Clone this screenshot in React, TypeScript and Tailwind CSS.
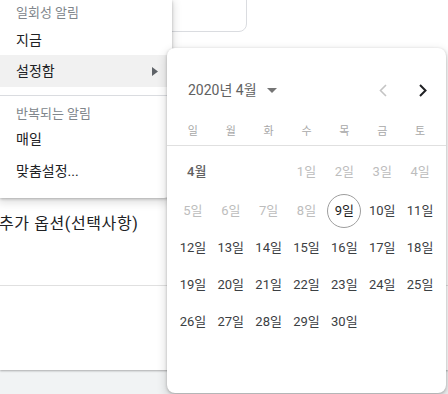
import React from "react";

const FONT = { fontFamily: "Roboto, 'Noto Sans CJK KR', 'Noto Sans', sans-serif" };

function Cell({ d, kind }: { d: number | null; kind: "past" | "today" | "future" | "empty" }) {
  if (kind === "empty" || d === null) return <div className="h-[37px]" />;
  if (kind === "today")
    return (
      <div className="h-[37px] flex items-center justify-center">
        <div className="w-[34px] h-[34px] rounded-full border border-[#9e9e9e] flex items-center justify-center text-[13px] text-[#212121]">
          {d}일
        </div>
      </div>
    );
  return (
    <div
      className={
        "h-full min-h-[37px] flex items-center justify-center text-[13px] " +
        (kind === "past" ? "text-[#bdbdbd]" : "text-[#3c4043]")
      }
    >
      {d}일
    </div>
  );
}

export default function App() {
  const days: { d: number | null; kind: "past" | "today" | "future" | "empty" }[] = [];
  for (let i = 1; i <= 30; i++) {
    days.push({ d: i, kind: i < 9 ? "past" : i === 9 ? "today" : "future" });
  }
  const week = ["일", "월", "화", "수", "목", "금", "토"];
  return (
    <div className="w-[448px] h-[394px] relative overflow-hidden bg-[#f1f3f4]" style={FONT}>
      {/* page card */}
      <div className="h-[370px] w-full bg-white shadow-[0_1px_2px_rgba(0,0,0,0.3)] flex flex-col">
        <div className="ml-[20px] mt-[-12px] w-[227px] h-[44px] rounded-lg border border-[#dadce0]" />
        <div className="mt-[180px] h-[24px] flex items-center text-[16px] tracking-[0.6px] text-[#202124] -ml-[1px]">
          추가 옵션(선택사항)
        </div>
        <div className="mt-[49px] border-t border-[#e0e0e0] w-full" />
      </div>

      {/* menu */}
      <div className="absolute left-0 top-0 w-[172px] h-[198px] bg-white rounded-br-lg shadow-[0_1px_3px_rgba(0,0,0,0.25),0_3px_8px_2px_rgba(0,0,0,0.12)] flex flex-col pt-[1px]">
        <div className="h-[24px] flex items-center px-[16px] text-[13px] text-[#80868b]">일회성 알림</div>
        <div className="h-[30px] flex items-center px-[16px] text-[14px] text-[#202124]">지금</div>
        <div className="h-[32px] flex items-center justify-between pl-[16px] pr-[14px] bg-[#f1f1f1] text-[14px] text-[#202124]">
          <span>설정함</span>
          <svg width="6" height="9" viewBox="0 0 6 9">
            <path d="M0 0 L6 4.5 L0 9 Z" fill="#5f6368" />
          </svg>
        </div>
        <div className="h-[8px]" />
        <div className="border-t border-[#dadce0]" />
        <div className="mt-[5px] h-[26px] flex items-center px-[16px] text-[13px] text-[#80868b]">반복되는 알림</div>
        <div className="h-[24px] flex items-center px-[16px] text-[14px] text-[#202124]">매일</div>
        <div className="h-[40px] flex items-center px-[16px] text-[14px] text-[#202124]">맞춤설정...</div>
      </div>

      {/* calendar popup */}
      <div className="absolute left-[167px] top-[48px] w-[279px] h-[345px] bg-white rounded-lg shadow-[0_1px_3px_rgba(0,0,0,0.25),0_4px_10px_2px_rgba(0,0,0,0.12)] flex flex-col">
        <div className="mt-[8px] h-[68px] flex items-center pl-[21px] pr-[19px]">
          <div className="flex items-center text-[14px] text-[#616161]">
            <span>2020년 4월</span>
            <svg className="ml-[10px]" width="10" height="5" viewBox="0 0 10 5">
              <path d="M0 0 L10 0 L5 5 Z" fill="#757575" />
            </svg>
          </div>
          <div className="ml-auto flex items-center gap-[32px]">
            <svg width="8" height="13" viewBox="0 0 8 13">
              <path d="M7 1 L1.5 6.5 L7 12" stroke="#c4c4c4" strokeWidth="1.6" fill="none" />
            </svg>
            <svg width="8" height="13" viewBox="0 0 8 13">
              <path d="M1 1 L6.5 6.5 L1 12" stroke="#202124" strokeWidth="2" fill="none" />
            </svg>
          </div>
        </div>
        <div className="grid grid-cols-7 px-[7px] h-[14px] items-center">
          {week.map((w) => (
            <div key={w} className="text-center text-[11px] text-[#a8a8a8]">
              {w}
            </div>
          ))}
        </div>
        <div className="mt-[7px] border-t border-[#e0e0e0]" />
        <div className="grid grid-cols-7 px-[7px] pt-[6px]">
          <div className="col-span-3 h-[40px] flex items-center pl-[13px] text-[13px] font-medium text-[#616161]">
            4월
          </div>
          {days.map((x) => (
            <Cell key={x.d ?? 0} d={x.d} kind={x.kind} />
          ))}
        </div>
      </div>
    </div>
  );
}
